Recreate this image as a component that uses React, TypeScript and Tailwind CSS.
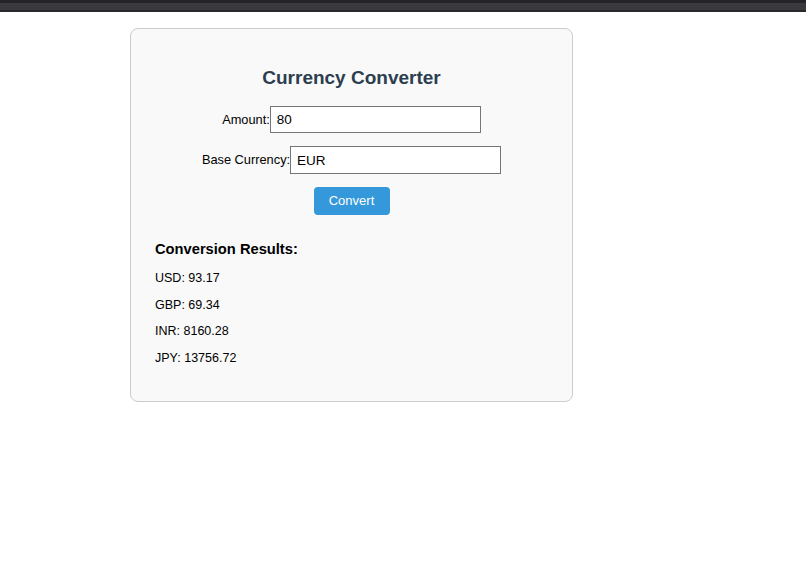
import React, { useState } from 'react';

const rates: Record<string, number> = {
  USD: 1.164625,
  GBP: 0.86675,
  INR: 102.0035,
  JPY: 171.959,
};

const App: React.FC = () => {
  const [amount, setAmount] = useState('80');
  const [base, setBase] = useState('EUR');
  const [results, setResults] = useState<[string, string][]>([
    ['USD', '93.17'],
    ['GBP', '69.34'],
    ['INR', '8160.28'],
    ['JPY', '13756.72'],
  ]);

  const handleConvert = () => {
    const value = parseFloat(amount) || 0;
    setResults(Object.entries(rates).map(([code, rate]) => [code, (value * rate).toFixed(2)]));
  };

  return (
    <div className="min-h-[564px] bg-white font-['Liberation_Sans',Arial,sans-serif] text-black">
      <div className="h-[3px] bg-[#242428]" />
      <div className="h-[7px] bg-[#3a3a3e]" />
      <div className="h-[2px] bg-[#2a2a2e]" />

      <div className="ml-[130px] mt-[16px] w-[443px] rounded-lg border border-[#ccc] bg-[#f9f9f9] px-5 pt-[35px] pb-[35px]">
        <h2 className="text-center text-[19px] font-bold leading-[28px] text-[#2c3e50]">Currency Converter</h2>

        <div className="mt-[14px] flex flex-col items-center gap-[13px]">
          <div className="flex items-center text-[12.8px]">
            <label htmlFor="amount">Amount:</label>
            <input
              id="amount"
              type="number"
              value={amount}
              onChange={(e) => setAmount(e.target.value)}
              className="h-[27px] w-[211px] border border-[#767676] bg-white px-[6px] text-[13.5px] outline-none [appearance:textfield]"
            />
          </div>
          <div className="flex items-center text-[12.8px]">
            <label htmlFor="base">Base Currency:</label>
            <input
              id="base"
              type="text"
              value={base}
              onChange={(e) => setBase(e.target.value)}
              className="h-[28px] w-[211px] border border-[#767676] bg-white px-[6px] text-[13.5px] outline-none"
            />
          </div>
          <button
            onClick={handleConvert}
            className="h-[28px] w-[76px] rounded-[4px] bg-[#3498db] text-[13px] text-white"
          >
            Convert
          </button>
        </div>

        <div className="mt-[24px] px-1">
          <h3 className="text-[14.7px] font-bold leading-[20px]">Conversion Results:</h3>
          <div className="mt-[11px] flex flex-col gap-[10.5px] text-[12.5px] leading-[16px]">
            {results.map(([code, val]) => (
              <p key={code}>
                {code}: {val}
              </p>
            ))}
          </div>
        </div>
      </div>
    </div>
  );
};

export default App;
